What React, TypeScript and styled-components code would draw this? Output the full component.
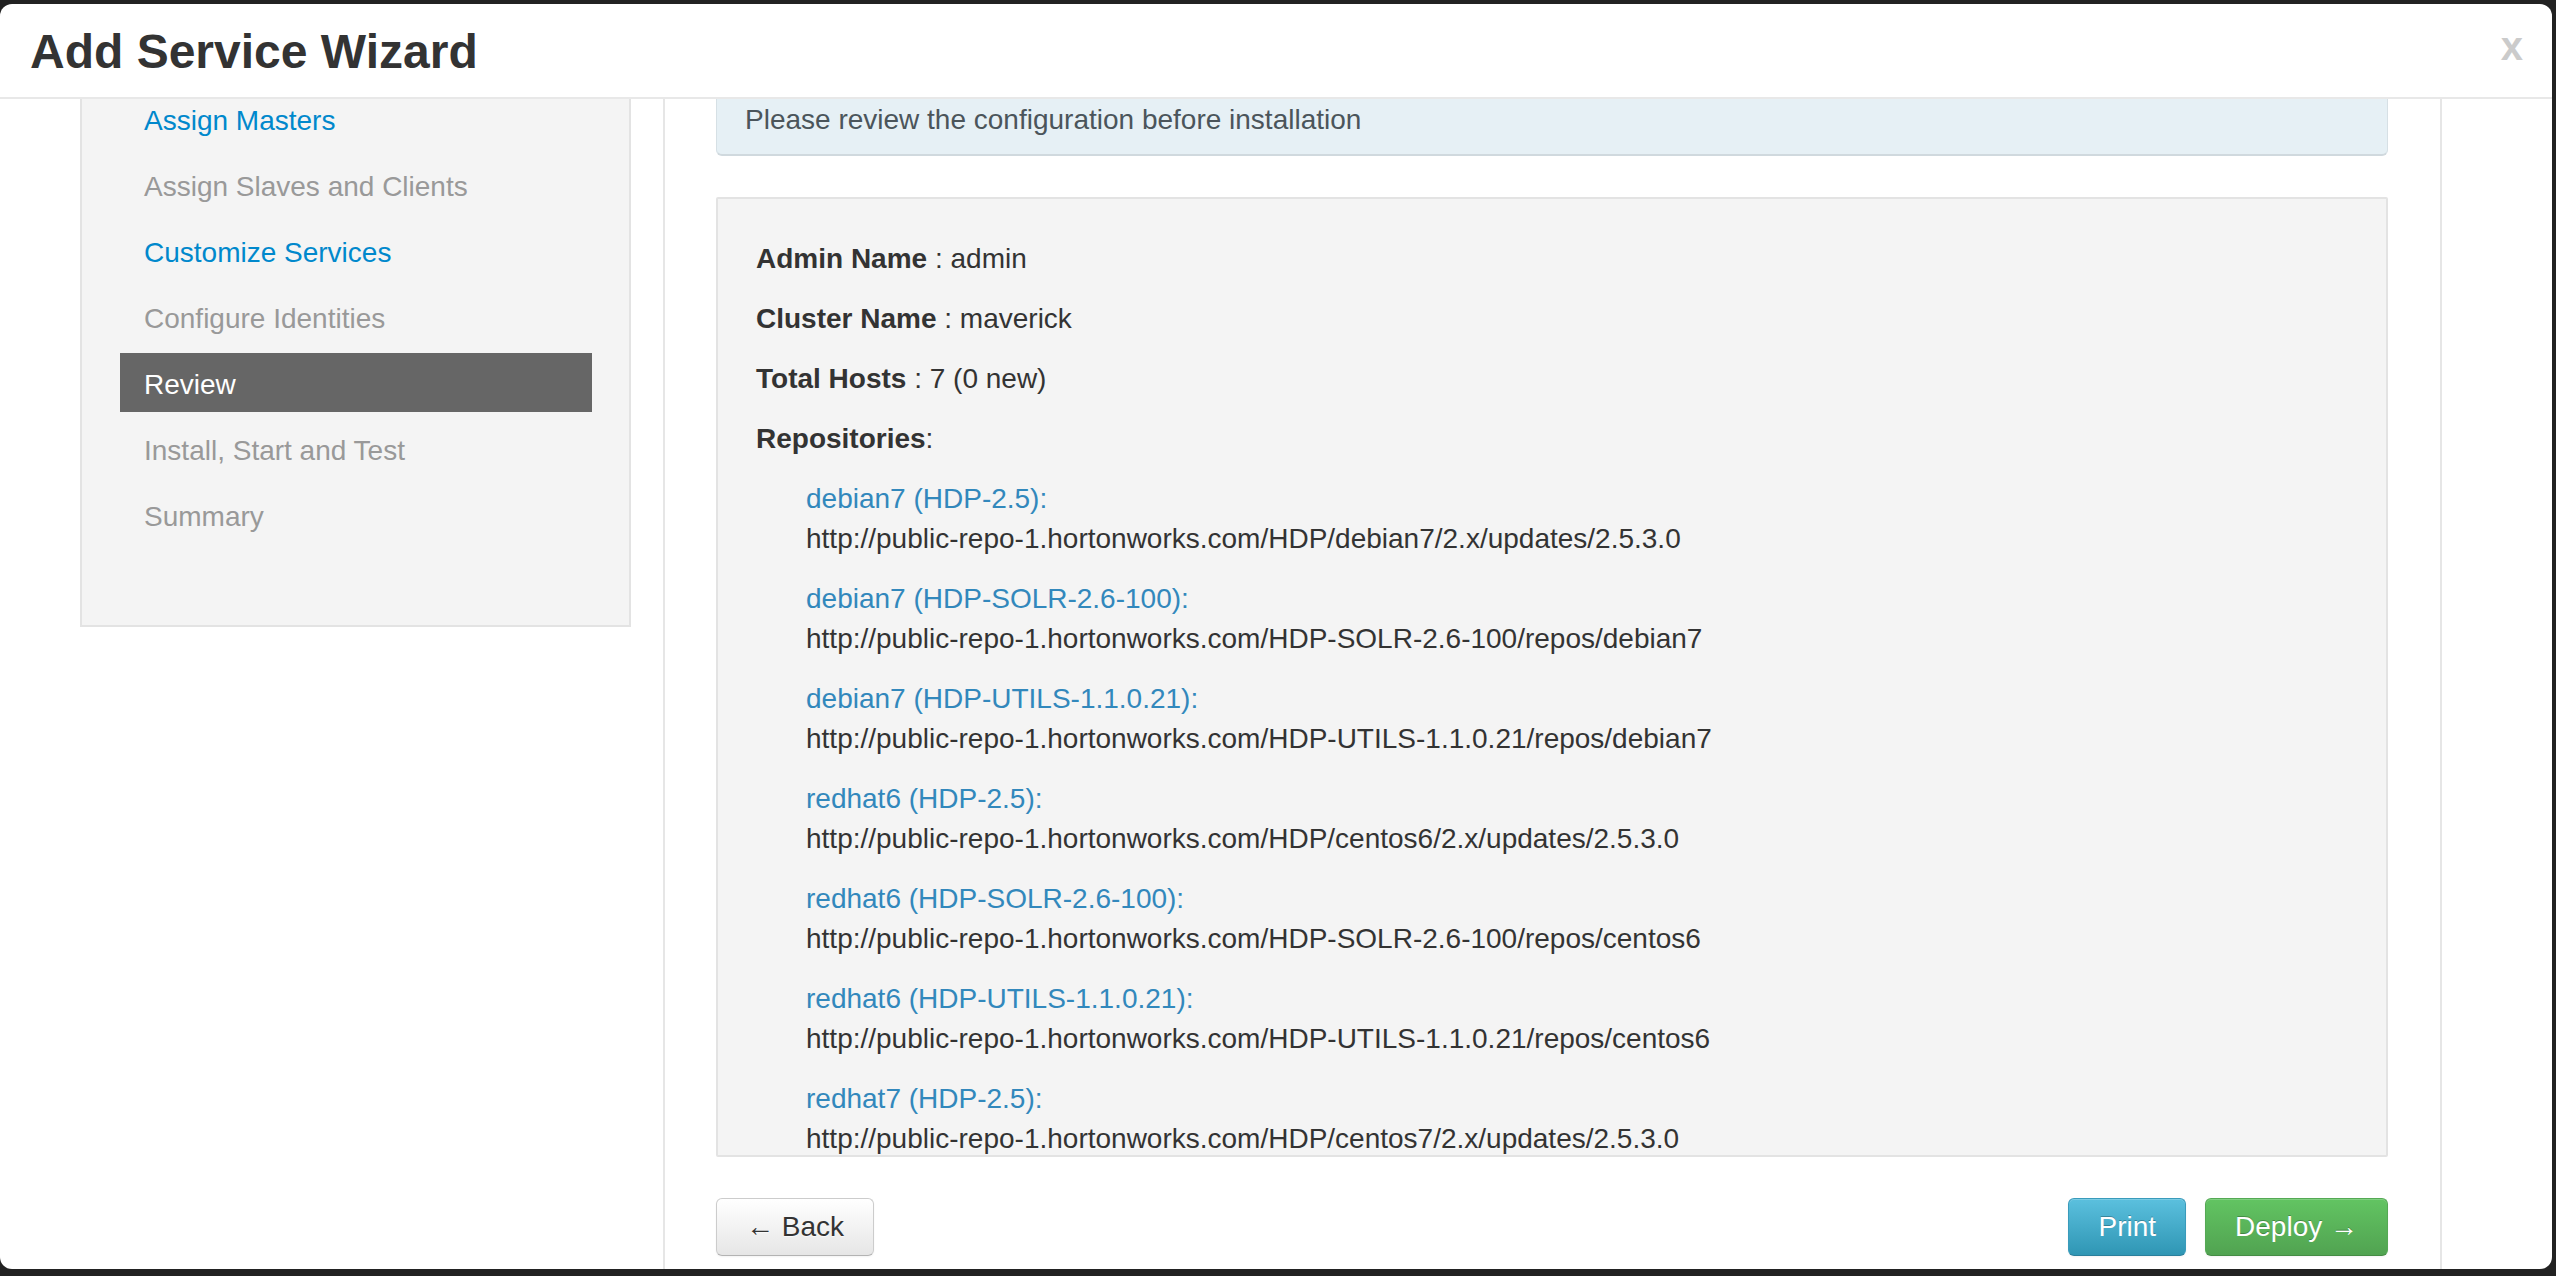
import React from "react";
import styled, { createGlobalStyle, css } from "styled-components";

const GlobalStyle = createGlobalStyle`
  html, body {
    margin: 0;
    padding: 0;
    background: #222;
    font-family: "Liberation Sans", Arial, Helvetica, sans-serif;
  }
  * { box-sizing: border-box; }
`;

const Backdrop = styled.div`
  height: 1276px;
  padding-top: 4px;
  overflow: hidden;
  background: #222;
`;

const Modal = styled.div`
  width: 2552px;
  height: 1265px;
  background: #fff;
  border-radius: 12px;
  display: flex;
  flex-direction: column;
  overflow: hidden;
`;

const Header = styled.div`
  flex: none;
  display: flex;
  justify-content: space-between;
  align-items: flex-start;
  padding: 19px 29px 17px 30px;
  border-bottom: 2px solid #e8e8e8;
`;

const Title = styled.h3`
  margin: 0;
  font-size: 48px;
  line-height: 57px;
  font-weight: bold;
  color: #333;
`;

const Close = styled.button`
  margin-top: 3px;
  padding: 0;
  border: 0;
  background: none;
  font-family: inherit;
  font-size: 40px;
  line-height: 40px;
  font-weight: bold;
  color: #cbcbcb;
  text-shadow: 0 1px 0 #fff;
  cursor: pointer;
`;

const Body = styled.div`
  flex: 1;
  min-height: 0;
  overflow: hidden;
  display: flex;
  flex-direction: column;
`;

const Row = styled.div`
  flex: 1;
  min-height: 0;
  margin-top: -96px;
  display: flex;
  align-items: stretch;
`;

const SideCol = styled.div`
  flex: none;
  width: 663px;
  padding: 0 32px 0 80px;
`;

const SidePanel = styled.div`
  background: #f4f4f4;
  border: 2px solid #e3e3e3;
  padding: 18px 37px 81px 38px;
`;

const NavList = styled.ul`
  list-style: none;
  margin: 0;
  padding: 0;
  display: flex;
  flex-direction: column;
  gap: 7px;
`;

type StepState = "done" | "todo" | "active";

const NavItem = styled.li<{ $state: StepState }>`
  height: 59px;
  padding: 12px 24px 7px;
  font-size: 28px;
  line-height: 40px;
  white-space: nowrap;
  ${(p) =>
    p.$state === "active"
      ? css`
          background: #666;
          color: #fff;
        `
      : p.$state === "done"
      ? css`
          color: #0088cc;
        `
      : css`
          color: #999;
        `}
`;

const MainCol = styled.div`
  flex: none;
  width: 1779px;
  min-height: 0;
  border-left: 2px solid #e6e6e6;
  border-right: 2px solid #e6e6e6;
  padding: 65px 52px 13px 51px;
  display: flex;
  flex-direction: column;
`;

const RightGutter = styled.div`
  flex: 1;
`;

const Alert = styled.div`
  flex: none;
  background: #e6f0f5;
  border: 1px solid #d6e0e5;
  border-bottom: 2px solid #d0d9de;
  border-radius: 6px;
  padding: 31px 28px 14px;
  font-size: 28px;
  line-height: 40px;
  color: #4b555b;
`;

const Well = styled.div`
  flex: 1;
  min-height: 0;
  overflow: hidden;
  margin-top: 41px;
  background: #f4f4f4;
  border: 2px solid #e3e3e3;
  border-radius: 2px;
  padding: 40px 38px 0;
  color: #333;
  font-size: 28px;
  line-height: 40px;
`;

const InfoRow = styled.div`
  margin-bottom: 20px;
  white-space: nowrap;
`;

const Key = styled.b`
  font-weight: bold;
`;

const RepoList = styled.div`
  padding-left: 50px;
`;

const Repo = styled.div`
  margin-bottom: 20px;
  white-space: nowrap;
`;

const RepoName = styled.div`
  color: #3288bc;
`;

const RepoUrl = styled.div`
  color: #333;
`;

const Footer = styled.div`
  flex: none;
  margin-top: 41px;
  display: flex;
  justify-content: space-between;
`;

const ButtonGroup = styled.div`
  display: flex;
  gap: 19px;
`;

type Variant = "default" | "info" | "success";

const Button = styled.button<{ $variant: Variant }>`
  font-family: inherit;
  font-size: 28px;
  line-height: 40px;
  padding: 8px 29px;
  border-radius: 6px;
  border: 1px solid;
  cursor: pointer;
  white-space: nowrap;
  ${(p) =>
    p.$variant === "default"
      ? css`
          color: #333;
          background: linear-gradient(#ffffff, #e6e6e6);
          border-color: #cccccc #cccccc #b3b3b3;
          text-shadow: 0 1px 1px rgba(255, 255, 255, 0.75);
          box-shadow: inset 0 1px 0 rgba(255, 255, 255, 0.2), 0 1px 2px rgba(0, 0, 0, 0.05);
        `
      : p.$variant === "info"
      ? css`
          color: #fff;
          background: linear-gradient(#5bc0de, #2f96b4);
          border-color: #3a9bbb #3a9bbb #2a7f9c;
          text-shadow: 0 -1px 0 rgba(0, 0, 0, 0.25);
          box-shadow: inset 0 1px 0 rgba(255, 255, 255, 0.2), 0 1px 2px rgba(0, 0, 0, 0.05);
        `
      : css`
          color: #fff;
          background: linear-gradient(#62c462, #51a351);
          border-color: #55a955 #55a955 #458c45;
          text-shadow: 0 -1px 0 rgba(0, 0, 0, 0.25);
          box-shadow: inset 0 1px 0 rgba(255, 255, 255, 0.2), 0 1px 2px rgba(0, 0, 0, 0.05);
        `}
`;

const steps: { label: string; state: StepState }[] = [
  { label: "Choose Services", state: "done" },
  { label: "Assign Masters", state: "done" },
  { label: "Assign Slaves and Clients", state: "todo" },
  { label: "Customize Services", state: "done" },
  { label: "Configure Identities", state: "todo" },
  { label: "Review", state: "active" },
  { label: "Install, Start and Test", state: "todo" },
  { label: "Summary", state: "todo" },
];

const base = "http://public-repo-1.hortonworks.com";

const repos: { name: string; url: string }[] = [
  { name: "debian7 (HDP-2.5):", url: `${base}/HDP/debian7/2.x/updates/2.5.3.0` },
  { name: "debian7 (HDP-SOLR-2.6-100):", url: `${base}/HDP-SOLR-2.6-100/repos/debian7` },
  { name: "debian7 (HDP-UTILS-1.1.0.21):", url: `${base}/HDP-UTILS-1.1.0.21/repos/debian7` },
  { name: "redhat6 (HDP-2.5):", url: `${base}/HDP/centos6/2.x/updates/2.5.3.0` },
  { name: "redhat6 (HDP-SOLR-2.6-100):", url: `${base}/HDP-SOLR-2.6-100/repos/centos6` },
  { name: "redhat6 (HDP-UTILS-1.1.0.21):", url: `${base}/HDP-UTILS-1.1.0.21/repos/centos6` },
  { name: "redhat7 (HDP-2.5):", url: `${base}/HDP/centos7/2.x/updates/2.5.3.0` },
  { name: "redhat7 (HDP-SOLR-2.6-100):", url: `${base}/HDP-SOLR-2.6-100/repos/centos7` },
  { name: "redhat7 (HDP-UTILS-1.1.0.21):", url: `${base}/HDP-UTILS-1.1.0.21/repos/centos7` },
];

export default function App() {
  return (
    <>
      <GlobalStyle />
      <Backdrop>
        <Modal>
          <Header>
            <Title>Add Service Wizard</Title>
            <Close aria-label="close">x</Close>
          </Header>
          <Body>
            <Row>
              <SideCol>
                <SidePanel>
                  <NavList>
                    {steps.map((s) => (
                      <NavItem key={s.label} $state={s.state}>
                        {s.label}
                      </NavItem>
                    ))}
                  </NavList>
                </SidePanel>
              </SideCol>
              <MainCol>
                <Alert>Please review the configuration before installation</Alert>
                <Well>
                  <InfoRow>
                    <Key>Admin Name</Key> : admin
                  </InfoRow>
                  <InfoRow>
                    <Key>Cluster Name</Key> : maverick
                  </InfoRow>
                  <InfoRow>
                    <Key>Total Hosts</Key> : 7 (0 new)
                  </InfoRow>
                  <InfoRow>
                    <Key>Repositories</Key>:
                  </InfoRow>
                  <RepoList>
                    {repos.map((r) => (
                      <Repo key={r.name}>
                        <RepoName>{r.name}</RepoName>
                        <RepoUrl>{r.url}</RepoUrl>
                      </Repo>
                    ))}
                  </RepoList>
                </Well>
                <Footer>
                  <Button $variant="default">← Back</Button>
                  <ButtonGroup>
                    <Button $variant="info">Print</Button>
                    <Button $variant="success">Deploy →</Button>
                  </ButtonGroup>
                </Footer>
              </MainCol>
              <RightGutter />
            </Row>
          </Body>
        </Modal>
      </Backdrop>
    </>
  );
}
